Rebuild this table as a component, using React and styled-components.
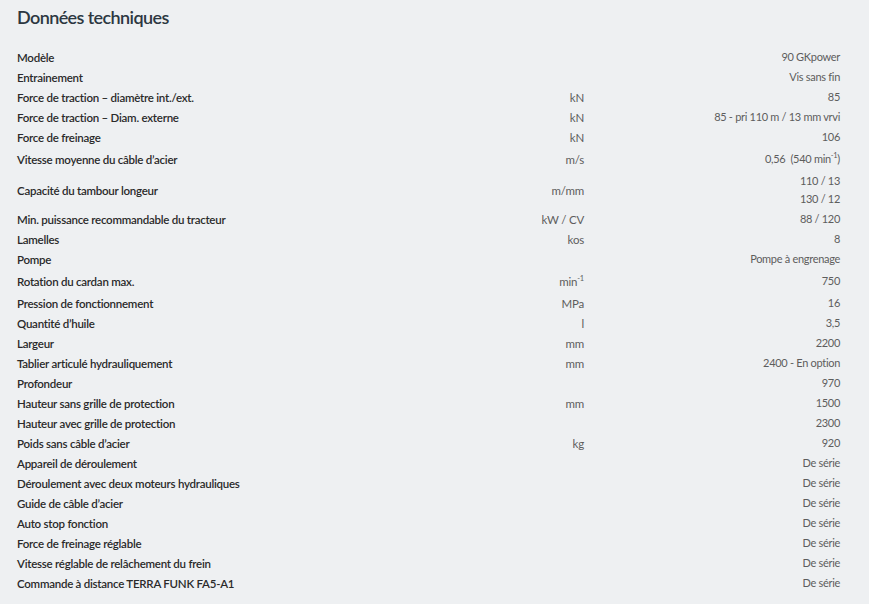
import React from "react"
import styled, { createGlobalStyle } from "styled-components"

const GlobalStyle = createGlobalStyle`
  html, body {
    margin: 0;
    padding: 0;
    background: #eef0f2;
  }
  body {
    font-family: "Lato", "DejaVu Sans Condensed", sans-serif;
  }
`

const Page = styled.div`
  width: 869px;
  height: 604px;
  box-sizing: border-box;
  padding: 5px 29px 0 17px;
  background: #eef0f2;
  overflow: hidden;
`

const Title = styled.h2`
  margin: 0 0 18px;
  font-size: 18px;
  font-weight: 600;
  letter-spacing: -0.6px;
  color: #2c3741;
  line-height: 24px;
`

const Table = styled.div`
  display: grid;
  grid-template-columns: 1fr 120px 256px;
`

const Row = styled.div`
  display: contents;
`

const Label = styled.div`
  display: flex;
  align-items: center;
  min-height: ${p => p.$h || 20}px;
  font-size: 11.5px;
  font-weight: 600;
  letter-spacing: -0.25px;
  color: #2a2a2a;
`

const Unit = styled.div`
  display: flex;
  align-items: center;
  justify-content: flex-end;
  font-size: 11.5px;
  letter-spacing: -0.2px;
  color: #5d5d5d;
`

const Value = styled.div`
  display: flex;
  flex-direction: column;
  align-items: flex-end;
  justify-content: center;
  font-size: 11px;
  letter-spacing: -0.3px;
  color: #5d5d5d;
  line-height: 18px;
`

const Sup = styled.sup`
  font-size: 7.5px;
  line-height: 0;
`

const rows = [
  ["Modèle", "", "90 GKpower"],
  ["Entrainement", "", "Vis sans fin"],
  ["Force de traction – diamètre int./ext.", "kN", "85"],
  ["Force de traction – Diam. externe", "kN", "85 - pri 110 m / 13 mm vrvi"],
  ["Force de freinage", "kN", "106"],
  ["Vitesse moyenne du câble d’acier", "m/s", <>0,56&nbsp; (540 min<Sup>-1</Sup>)</>, 24],
  ["Capacité du tambour longeur", "m/mm", ["110 / 13", "130 / 12"], 38],
  ["Min. puissance recommandable du tracteur", "kW / CV", "88 / 120"],
  ["Lamelles", "kos", "8"],
  ["Pompe", "", "Pompe à engrenage"],
  ["Rotation du cardan max.", <>min<Sup>-1</Sup></>, "750", 24],
  ["Pression de fonctionnement", "MPa", "16"],
  ["Quantité d’huile", "l", "3,5"],
  ["Largeur", "mm", "2200"],
  ["Tablier articulé hydrauliquement", "mm", "2400 - En option"],
  ["Profondeur", "", "970"],
  ["Hauteur sans grille de protection", "mm", "1500"],
  ["Hauteur avec grille de protection", "", "2300"],
  ["Poids sans câble d’acier", "kg", "920"],
  ["Appareil de déroulement", "", "De série"],
  ["Déroulement avec deux moteurs hydrauliques", "", "De série"],
  ["Guide de câble d’acier", "", "De série"],
  ["Auto stop fonction", "", "De série"],
  ["Force de freinage réglable", "", "De série"],
  ["Vitesse réglable de relâchement du frein", "", "De série"],
  ["Commande à distance TERRA FUNK FA5-A1", "", "De série"],
]

export default function App() {
  return (
    <>
      <GlobalStyle />
      <Page>
        <Title>Données techniques</Title>
        <Table>
          {rows.map(([label, unit, value, h], i) => (
            <Row key={i}>
              <Label $h={h}>{label}</Label>
              <Unit>
                <span>{unit}</span>
              </Unit>
              <Value>
                {Array.isArray(value) ? (
                  value.map(v => <span key={v}>{v}</span>)
                ) : (
                  <span>{value}</span>
                )}
              </Value>
            </Row>
          ))}
        </Table>
      </Page>
    </>
  )
}
